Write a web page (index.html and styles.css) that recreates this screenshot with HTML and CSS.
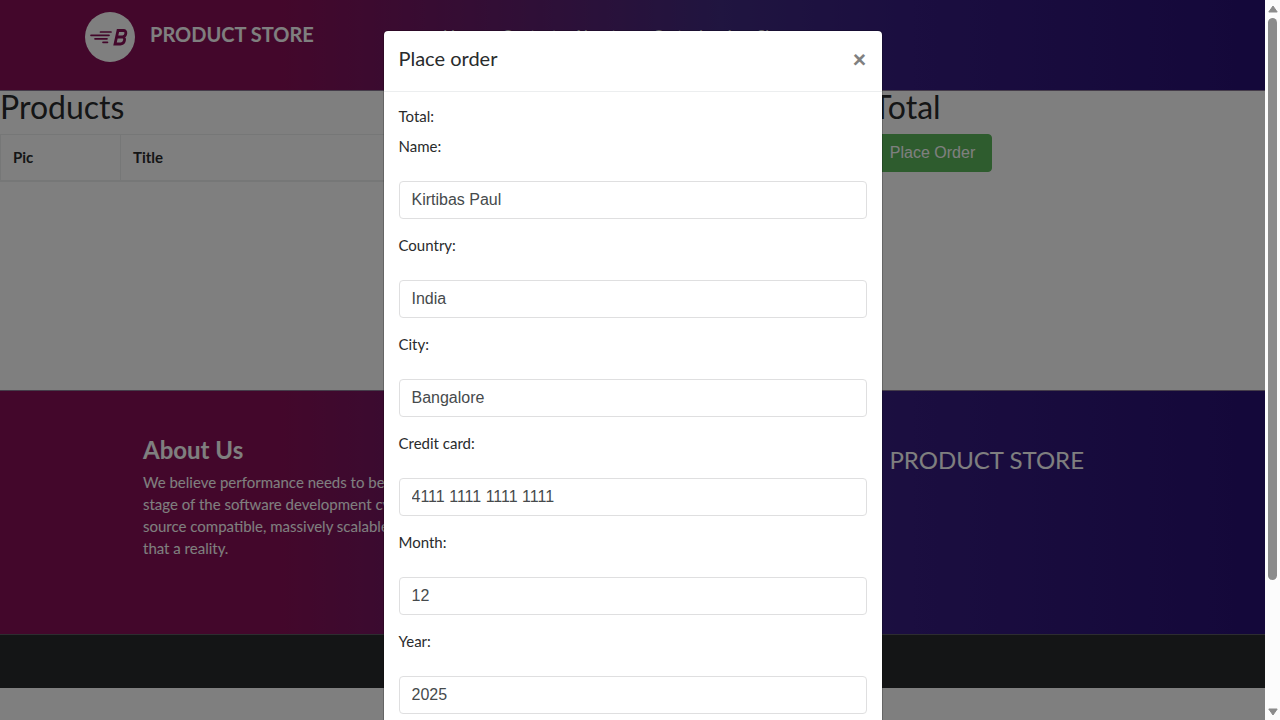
FILE: index.html
```html
<!DOCTYPE html>
<html lang="en">
<head>
<meta charset="utf-8">
<title>STORE</title>
<link rel="stylesheet" href="styles.css">
</head>
<body>
<div class="window">
  <div class="page">
    <nav class="navbar">
      <a class="brand" href="#">
        <svg class="brand-logo" viewBox="0 0 50 50" aria-hidden="true">
          <circle cx="25" cy="25" r="25" fill="#fff"/>
          <g stroke="#870f56" stroke-width="1.7" stroke-linecap="round">
            <path d="M15.500 20H26M6 23.300H24M10 26.800H22M18 30.300H22.500"/>
          </g>
          <path d="M33 18.500h5.500c3.500 0 3 5.700-.8 6.300c3.400 .8 2 7.200-2.300 7.200h-5.400zM31.500 25h6" fill="none" stroke="#870f56" stroke-width="2.800"/>
        </svg>
        <span>PRODUCT STORE</span>
      </a>
      <div class="nav-links">
        <a href="#">Home</a><a href="#">Contact</a><a href="#">About us</a><a href="#">Cart</a><a href="#">Log in</a><a href="#">Sign up</a>
      </div>
    </nav>
    <main class="content">
      <section class="products">
        <h2>Products</h2>
        <table class="cart-table">
          <thead><tr><th class="col-pic">Pic</th><th>Title</th><th>Price</th><th>x</th></tr></thead>
        </table>
      </section>
      <section class="summary">
        <h2>Total</h2>
        <button class="btn-success" type="button">Place Order</button>
      </section>
    </main>
    <footer class="footer">
      <div class="about">
        <h4>About Us</h4>
        <p>We believe performance needs to be validated at every stage of the software development cycle and our open source compatible, massively scalable platform makes that a reality.</p>
      </div>
      <div class="footer-brand">PRODUCT STORE</div>
    </footer>
    <div class="copyright"></div>
  </div>
  <div class="backdrop">
    <div class="modal" role="dialog" aria-labelledby="order-title">
      <header class="modal-header">
        <h5 id="order-title">Place order</h5>
        <button class="close" type="button" aria-label="Close">×</button>
      </header>
      <form class="modal-body">
        <p class="total">Total:</p>
        <div class="field"><label for="name">Name:</label><input id="name" type="text" value="Kirtibas Paul"></div>
        <div class="field"><label for="country">Country:</label><input id="country" type="text" value="India"></div>
        <div class="field"><label for="city">City:</label><input id="city" type="text" value="Bangalore"></div>
        <div class="field"><label for="card">Credit card:</label><input id="card" type="text" value="4111 1111 1111 1111"></div>
        <div class="field"><label for="month">Month:</label><input id="month" type="text" value="12"></div>
        <div class="field"><label for="year">Year:</label><input id="year" type="text" value="2025"></div>
      </form>
    </div>
  </div>
</div>
<div class="scrollbar" aria-hidden="true">
  <svg viewBox="0 0 10 8"><path d="M5 1L9.200 7H.8z" fill="#8b8b8b" stroke="#8b8b8b" stroke-linejoin="round"/></svg>
  <div class="track"><div class="thumb"></div></div>
  <svg viewBox="0 0 10 8"><path d="M5 7L9.200 1H.8z" fill="#8b8b8b" stroke="#8b8b8b" stroke-linejoin="round"/></svg>
</div>
</body>
</html>
```
FILE: styles.css
```css
* { box-sizing: border-box; }
body {
  margin: 0;
  display: flex;
  height: 100vh;
  overflow: hidden;
  font-family: Lato, sans-serif;
  font-size: 15px;
  line-height: 22px;
  color: #292b2c;
  background: #fff;
}
h2, h4, h5, p { margin: 0; font-weight: 400; }
a { color: inherit; text-decoration: none; }

.window { position: relative; flex: 1; min-width: 0; overflow: hidden; }

.navbar, .footer {
  color: #fff;
  background: linear-gradient(to right, #870f56 0%, #870f56 22%, #402a80 57%, #361c80 72%, #281074 100%);
}
.navbar {
  display: flex;
  padding: 12px 85px 28px;
  border-bottom: 1px solid #8a7a94;
}
.brand {
  display: flex;
  gap: 15px;
  width: 358px;
  font-size: 20px;
  line-height: 44px;
  font-weight: 700;
}
.brand-logo { width: 50px; height: 50px; }
.nav-links { display: flex; gap: 16px; font-size: 16px; line-height: 46px; }

.content { display: flex; min-height: 299px; }
h2 { font-size: 32px; line-height: 32px; margin-bottom: 11px; }
.products { flex: 0 0 69%; }
.cart-table { width: 100%; border-collapse: collapse; }
.cart-table th {
  padding: 11px 12px 12px;
  text-align: left;
  border: 1px solid #eceeef;
  border-bottom-width: 2px;
}
.col-pic { width: 120px; }
.btn-success {
  padding: 9px 16px;
  border: 1px solid #5cb85c;
  border-radius: 4px;
  color: #fff;
  background: #5cb85c;
  font: 16px/18px "Liberation Sans", sans-serif;
}

.footer {
  display: flex;
  justify-content: space-between;
  padding: 46px 181px 75px 143px;
  border-top: 1px solid #8a7a94;
}
.about { width: 370px; }
.about h4 { font-size: 24px; line-height: 26px; font-weight: 700; margin-bottom: 8px; }
.footer-brand { font-size: 24px; line-height: 46px; }
.copyright { height: 54px; background: #292b2c; border-top: 1px solid #5a5a60; }

.backdrop {
  position: absolute;
  inset: 0;
  padding: 30px 16px;
  background: rgba(0, 0, 0, 0.5);
}
.modal {
  max-width: 500px;
  margin: 0 auto;
  padding-bottom: 90px;
  background: #fff;
  background-clip: padding-box;
  border: 1px solid rgba(0, 0, 0, 0.2);
  border-radius: 5px;
}
.modal-header {
  display: flex;
  justify-content: space-between;
  padding: 12px 15px 16px;
  border-bottom: 1px solid #eceeef;
}
.modal-header h5 { font-size: 20px; line-height: 30px; }
.close {
  align-self: flex-start;
  padding: 0;
  border: 0;
  background: none;
  color: #808080;
  font: 900 24px/32px Lato, sans-serif;
}
.modal-body { padding: 13px 15px; }
.total { margin-bottom: 8px; }
.field { margin-bottom: 15px; }
.field label { display: block; margin-bottom: 24px; }
.field input {
  display: block;
  width: 100%;
  height: 38px;
  padding: 0 12px;
  border: 1px solid #dfdfe0;
  border-radius: 4px;
  color: #464a4c;
  background: #fff;
  font: 16px "Liberation Sans", sans-serif;
}

.scrollbar {
  display: flex;
  flex-direction: column;
  align-items: center;
  gap: 5px;
  width: 15px;
  padding: 5px 0 4px;
  background: #fcfcfc;
}
.scrollbar svg { width: 10px; height: 8px; }
.track { flex: 1; }
.thumb { width: 9px; height: 82%; border-radius: 5px; background: #8b8b8b; }
```
